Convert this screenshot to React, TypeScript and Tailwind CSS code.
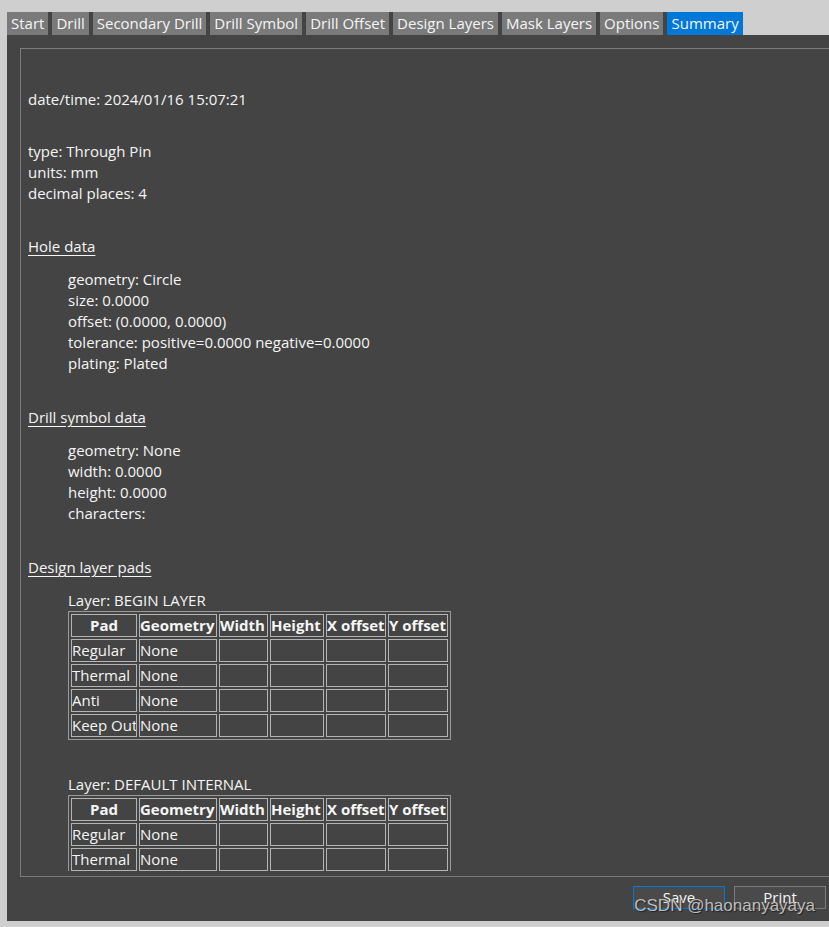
import React from "react";

const tabs = [
  "Start",
  "Drill",
  "Secondary Drill",
  "Drill Symbol",
  "Drill Offset",
  "Design Layers",
  "Mask Layers",
  "Options",
  "Summary",
];

const font = "font-['Segoe_UI','Open_Sans',sans-serif]";

const PadTable = ({ rows }: { rows: string[] }) => (
  <table className="w-[383px] table-fixed border-separate border-spacing-[2px] border border-[#9a9a9a] text-[15px] leading-[21px]">
    <thead>
      <tr>
        <th className="w-[66px] border border-[#b4b4b4] text-center font-bold whitespace-nowrap overflow-hidden">Pad</th>
        <th className="w-[78px] border border-[#b4b4b4] text-left font-bold whitespace-nowrap overflow-hidden">Geometry</th>
        <th className="w-[49px] border border-[#b4b4b4] text-left font-bold whitespace-nowrap overflow-hidden">Width</th>
        <th className="w-[54px] border border-[#b4b4b4] text-left font-bold whitespace-nowrap overflow-hidden">Height</th>
        <th className="w-[60px] border border-[#b4b4b4] text-left font-bold whitespace-nowrap overflow-hidden">X offset</th>
        <th className="w-[60px] border border-[#b4b4b4] text-left font-bold whitespace-nowrap overflow-hidden">Y offset</th>
      </tr>
    </thead>
    <tbody>
      {rows.map((r) => (
        <tr key={r}>
          <td className="border border-[#b4b4b4] text-left whitespace-nowrap overflow-hidden">{r}</td>
          <td className="border border-[#b4b4b4]">None</td>
          <td className="border border-[#b4b4b4]"></td>
          <td className="border border-[#b4b4b4]"></td>
          <td className="border border-[#b4b4b4]"></td>
          <td className="border border-[#b4b4b4]"></td>
        </tr>
      ))}
    </tbody>
  </table>
);

const Line = ({ children, className = "" }: { children: React.ReactNode; className?: string }) => (
  <div className={`h-[21px] leading-[21px] whitespace-nowrap ${className}`}>{children}</div>
);

export default function App() {
  return (
    <div className={`h-[927px] w-[829px] overflow-hidden bg-[#cfcfcf] pl-[7px] pt-[12px] ${font} text-[15px] text-[#f5f5f5]`}>
      {/* Tabs */}
      <div className="flex h-[23px] w-fit gap-[4px] bg-[#444444]">
        {tabs.map((t) => (
          <div
            key={t}
            className={`flex items-center whitespace-nowrap px-[4px] leading-[23px] ${
              t === "Summary" ? "bg-[#0078d7]" : "bg-[#7a7a7a]"
            }`}
          >
            {t}
          </div>
        ))}
      </div>

      {/* Panel */}
      <div className="relative flex h-[886px] flex-col bg-[#444444] pl-[13px] pt-[13px]">
        <div className="h-[829px] w-[860px] border border-[#7c7c7c] pl-[7px]">
          <div className="h-[822px] overflow-hidden pt-[40px]">
            <Line>date/time: 2024/01/16 15:07:21</Line>
            <div className="mt-[31px]">
              <Line>type: Through Pin</Line>
              <Line>units: mm</Line>
              <Line>decimal places: 4</Line>
            </div>

            <Line className="mt-[32px] underline underline-offset-[3px]">Hole data</Line>
            <div className="mt-[12px] pl-[40px]">
              <Line>geometry: Circle</Line>
              <Line>size: 0.0000</Line>
              <Line>offset: (0.0000, 0.0000)</Line>
              <Line>tolerance: positive=0.0000 negative=0.0000</Line>
              <Line>plating: Plated</Line>
            </div>

            <Line className="mt-[33px] underline underline-offset-[3px]">Drill symbol data</Line>
            <div className="mt-[12px] pl-[40px]">
              <Line>geometry: None</Line>
              <Line>width: 0.0000</Line>
              <Line>height: 0.0000</Line>
              <Line>characters:</Line>
            </div>

            <Line className="mt-[33px] underline underline-offset-[3px]">Design layer pads</Line>
            <div className="mt-[12px] pl-[40px]">
              <Line>Layer: BEGIN LAYER</Line>
              <PadTable rows={["Regular", "Thermal", "Anti", "Keep Out"]} />
              <Line className="mt-[34px]">Layer: DEFAULT INTERNAL</Line>
              <PadTable rows={["Regular", "Thermal", "Anti", "Keep Out"]} />
            </div>
          </div>
        </div>

        {/* Buttons */}
        <div className="mt-[9px] flex justify-end gap-[9px] pr-[3px]">
          <button className="h-[23px] w-[92px] border border-[#0078d7] bg-[#4a4a4a] leading-[21px] text-[15px] text-[#f5f5f5]">
            Save
          </button>
          <button className="h-[23px] w-[92px] border border-[#7c7c7c] bg-[#4a4a4a] leading-[21px] text-[15px] text-[#f5f5f5]">
            Print
          </button>
        </div>

        {/* watermark */}
        <div className="absolute bottom-[3px] right-[14px] font-['Liberation_Sans',Arial,sans-serif] text-[17px] text-[#bdbdbd] [text-shadow:1px_1px_1px_#222]">
          CSDN @haonanyayaya
        </div>
      </div>
    </div>
  );
}
